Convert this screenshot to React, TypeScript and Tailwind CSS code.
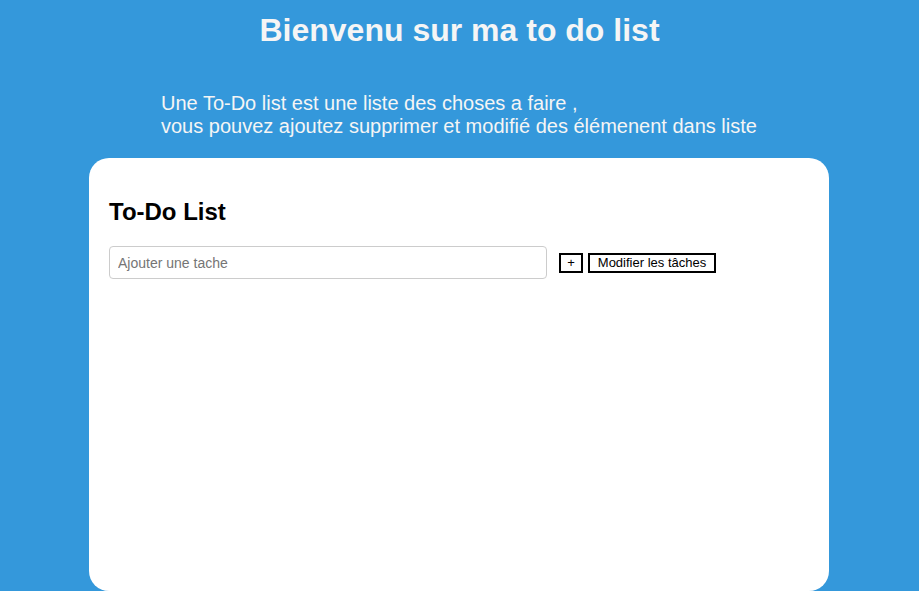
export default function App() {
  return (
    <div className="min-h-screen bg-[#3498db] font-['Liberation_Sans',Arial,sans-serif] overflow-hidden">
      {/* Header */}
      <h1 className="pt-[12px] text-center text-[32px] leading-[37px] font-bold text-[#f5f5f5]">
        Bienvenu sur ma to do list
      </h1>

      <div className="w-[740px] ml-[89px] pt-[43px] pb-[20px] pl-[72px]">
        <p className="text-[20px] leading-[23px] text-[#f5f5f5]">
          Une To-Do list est une liste des choses a faire ,
          <br />
          vous pouvez ajoutez supprimer et modifié des élémenent dans liste
        </p>
      </div>

      {/* Card */}
      <main className="w-[740px] h-[433px] ml-[89px] bg-white rounded-[20px] p-[20px]">
        <h2 className="mt-[20px] mb-[20px] text-[24px] leading-[28px] font-bold text-black">To-Do List</h2>

        <div className="flex items-center">
          <input
            type="text"
            placeholder="Ajouter une tache"
            className="w-[438px] h-[33px] px-[8px] text-[14px] border border-[#cccccc] rounded-[4px] placeholder:text-[#757575] outline-none"
          />
          <button className="ml-[12px] h-[20px] w-[24px] text-[13px] leading-[16px] bg-white border-2 border-black text-black">
            +
          </button>
          <button className="ml-[5px] h-[20px] w-[128px] text-[13px] leading-[16px] bg-white border-2 border-black text-black">
            Modifier les tâches
          </button>
        </div>
      </main>
    </div>
  )
}
